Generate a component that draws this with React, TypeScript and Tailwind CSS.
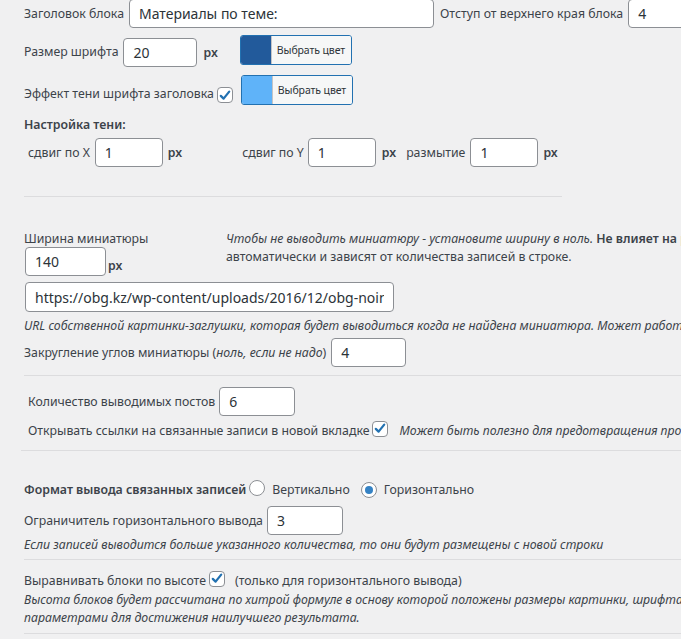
import React from "react";

// WP-admin style settings block for "related posts"

const FONT = { fontFamily: '"Noto Sans", "Liberation Sans", sans-serif' };

const INPUT =
  "h-[29px] shrink-0 bg-white border border-[#8c8f94] rounded-[4px] px-[9px] text-[14px] text-[#2c3338] outline-none";

function Check() {
  return (
    <span className="inline-flex w-[16px] h-[16px] bg-white border border-[#8c8f94] rounded-[4px] items-center justify-center shrink-0">
      <svg width="15" height="15" viewBox="0 0 20 20">
        <path d="M4 10.5 L8 14.5 L16 4.5" fill="none" stroke="#2271b1" strokeWidth="3.2" strokeLinecap="round" strokeLinejoin="round" />
      </svg>
    </span>
  );
}

function Radio({ on }: { on?: boolean }) {
  return (
    <span className="inline-flex w-[16px] h-[16px] bg-white border border-[#8c8f94] rounded-full items-center justify-center shrink-0">
      {on && <span className="w-[8px] h-[8px] rounded-full bg-[#3582c4]" />}
    </span>
  );
}

function ColorBtn({ color }: { color: string }) {
  return (
    <div className="flex h-[30px] w-[112px] shrink-0 border border-[#2271b1] rounded-[3px] overflow-hidden">
      <span className="w-[30px] h-full shrink-0" style={{ background: color }} />
      <span className="flex-1 bg-[#f6f7f7] border-l border-[#c3c4c7] text-[10.5px] leading-[28px] pl-[5px] text-[#2c3338] tracking-[-0.1px]">
        Выбрать цвет
      </span>
    </div>
  );
}

const Hr = ({ cls }: { cls: string }) => <div className={"h-px bg-[#dcdcde] " + cls} />;

export default function App() {
  return (
    <div
      className="w-[681px] h-[639px] overflow-hidden bg-[#f0f0f1] text-[12.3px] leading-[18px] text-[#3c434a] whitespace-nowrap"
      style={FONT}
    >
      {/* Заголовок блока */}
      <div className="flex items-center pl-[24px] h-[29px] -mt-px">
        <span>Заголовок блока</span>
        <input className={INPUT + " ml-[5px] w-[305px]"} defaultValue="Материалы по теме:" />
        <span className="ml-[6px]">Отступ от верхнего края блока</span>
        <input className={INPUT + " ml-[5px] w-[80px]"} defaultValue="4" />
      </div>

      {/* Размер шрифта */}
      <div className="flex items-start pl-[24px] mt-[7px] h-[40px]">
        <span className="mt-[8px]">Размер шрифта</span>
        <input className={INPUT + " ml-[5px] mt-[3px] w-[74px]"} defaultValue="20" />
        <span className="ml-[6px] mt-[9px] font-semibold">px</span>
        <div className="ml-[22px]">
          <ColorBtn color="#225a9b" />
        </div>
      </div>

      {/* Тень */}
      <div className="flex items-start pl-[24px] h-[32px]">
        <span className="mt-[10px]">Эффект тени шрифта заголовка</span>
        <span className="ml-[3px] mt-[12px]">
          <Check />
        </span>
        <div className="ml-[8px]">
          <ColorBtn color="#5fb3f9" />
        </div>
      </div>

      <div className="pl-[24px] mt-[9px] font-semibold">Настройка тени:</div>

      <div className="flex items-center pl-[28px] mt-[4px] h-[29px]">
        <span>сдвиг по X</span>
        <input className={INPUT + " ml-[5px] w-[68px]"} defaultValue="1" />
        <span className="ml-[5px] font-semibold">px</span>
        <span className="ml-[60px]">сдвиг по Y</span>
        <input className={INPUT + " ml-[4px] w-[68px]"} defaultValue="1" />
        <span className="ml-[6px] font-semibold">px</span>
        <span className="ml-[10px]">размытие</span>
        <input className={INPUT + " ml-[5px] w-[68px]"} defaultValue="1" />
        <span className="ml-[5px] font-semibold">px</span>
      </div>

      <Hr cls="ml-[24px] w-[538px] mt-[29px]" />

      {/* Миниатюра */}
      <div className="flex pl-[24px] mt-[33px]">
        <div className="w-[202px] shrink-0">
          <div>Ширина миниатюры</div>
          <div className="flex items-end -mt-px">
            <input className={INPUT + " ml-px w-[81px]"} defaultValue="140" />
            <span className="ml-[2px] font-semibold leading-[20px]">px</span>
          </div>
        </div>
        <div>
          <div>
            <i>Чтобы не выводить миниатюру - установите ширину в ноль.</i>{" "}
            <b className="font-semibold">Не влияет на размеры блоков, которые рассчитываются</b>
          </div>
          <div>автоматически и зависят от количества записей в строке.</div>
        </div>
      </div>

      <input
        className={INPUT + " block ml-[25px] mt-[6px] w-[369px] h-[30px]"}
        defaultValue="https://obg.kz/wp-content/uploads/2016/12/obg-noimage.png"
      />
      <div className="pl-[24px] mt-[5px] italic">
        URL собственной картинки-заглушки, которая будет выводиться когда не найдена миниатюра. Может работать
      </div>

      <div className="flex items-center pl-[24px] mt-[3px] h-[29px]">
        <span>
          Закругление углов миниатюры (<i>ноль, если не надо</i>)
        </span>
        <input className={INPUT + " ml-[5px] w-[75px]"} defaultValue="4" />
      </div>

      <Hr cls="ml-[24px] mt-[8px]" />

      {/* Посты */}
      <div className="flex items-center pl-[28px] mt-[11px] h-[29px]">
        <span>Количество выводимых постов</span>
        <input className={INPUT + " ml-[4px] w-[76px]"} defaultValue="6" />
      </div>
      <div className="flex items-center pl-[28px] mt-[5px] h-[20px]">
        <span>Открывать ссылки на связанные записи в новой вкладке</span>
        <span className="ml-[3px]">
          <Check />
        </span>
        <i className="ml-[11px]">Может быть полезно для предотвращения проблем</i>
      </div>

      <Hr cls="ml-[21px] mt-[9px]" />

      {/* Формат */}
      <div className="flex items-center pl-[24px] mt-[29px] h-[20px]">
        <span className="font-semibold">Формат вывода связанных записей</span>
        <span className="ml-[3px]">
          <Radio />
        </span>
        <span className="ml-[7px]">Вертикально</span>
        <span className="ml-[11px]">
          <Radio on />
        </span>
        <span className="ml-[7px]">Горизонтально</span>
      </div>
      <div className="flex items-center pl-[24px] mt-[6px] h-[29px]">
        <span>Ограничитель горизонтального вывода</span>
        <input className={INPUT + " ml-[4px] w-[76px]"} defaultValue="3" />
      </div>
      <div className="pl-[24px] mt-[1px] italic">
        Если записей выводится больше указанного количества, то они будут размещены с новой строки
      </div>

      <Hr cls="ml-[24px] mt-[5px]" />

      <div className="flex items-center pl-[24px] mt-[11px] h-[20px]">
        <span>Выравнивать блоки по высоте</span>
        <span className="ml-[3px]">
          <Check />
        </span>
        <span className="ml-[10px]">(только для горизонтального вывода)</span>
      </div>
      <div className="pl-[24px] italic">
        Высота блоков будет рассчитана по хитрой формуле в основу которой положены размеры картинки, шрифта и прочего
      </div>
      <div className="pl-[24px] italic">параметрами для достижения наилучшего результата.</div>

      <Hr cls="ml-[24px] mt-[6px]" />
    </div>
  );
}
